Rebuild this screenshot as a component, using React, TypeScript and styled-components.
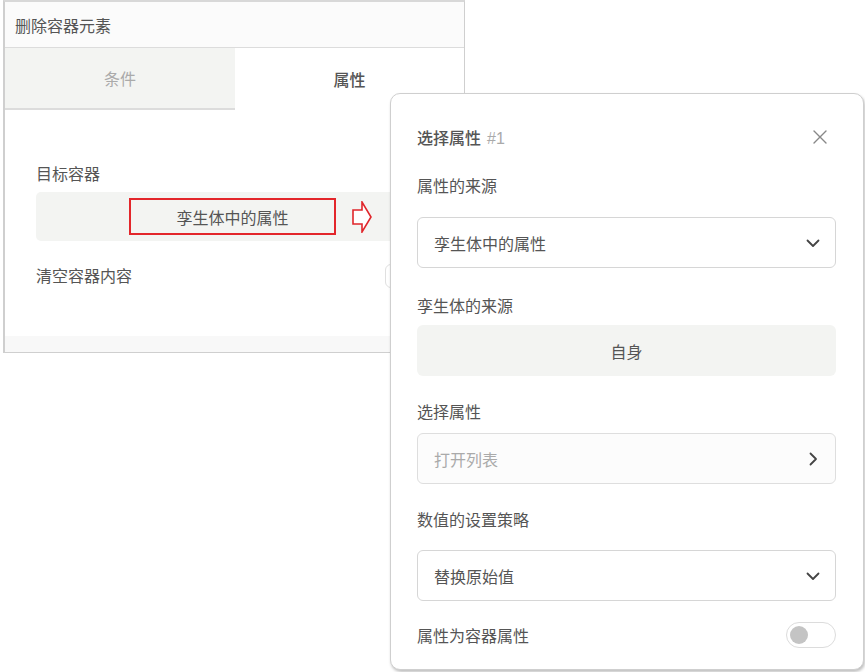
import React from "react";
import styled, { createGlobalStyle } from "styled-components";

const GlobalStyle = createGlobalStyle`
  html, body {
    margin: 0;
    padding: 0;
    background: #ffffff;
  }
  body {
    font-family: "Noto Sans CJK SC", "Noto Sans", sans-serif;
    color: #555;
  }
`;

const Page = styled.div`
  position: relative;
  width: 865px;
  height: 672px;
  overflow: hidden;
  background: #fff;
`;

/* ---- left panel ---- */

const Panel = styled.div`
  margin-left: 3px;
  width: 459px;
  height: 350px;
  border: 1px solid #cfcfcf;
  border-left-width: 2px;
  border-top: 2px solid #d8d8d8;
  display: flex;
  flex-direction: column;
  background: #f8f8f8;
`;

const PanelHeader = styled.div`
  height: 45px;
  display: flex;
  align-items: center;
  padding-left: 10px;
  font-size: 16px;
  color: #555;
  background: #fbfbfb;
  border-bottom: 1px solid #dcdcdc;
`;

const Tabs = styled.div`
  display: flex;
  height: 62px;
`;

const Tab = styled.div<{ $active?: boolean }>`
  flex: 0 0 ${(p) => (p.$active ? "229px" : "230px")};
  display: flex;
  align-items: center;
  justify-content: center;
  font-size: 16px;
  color: ${(p) => (p.$active ? "#555" : "#aaa")};
  background: ${(p) => (p.$active ? "#fff" : "#f3f4f2")};
  border-bottom: ${(p) => (p.$active ? "none" : "2px solid #dcdcdc")};
  font-weight: ${(p) => (p.$active ? 500 : 400)};
`;

const PanelBody = styled.div`
  background: #fff;
  height: 226px;
  padding: 51px 0 0 31px;
  box-sizing: border-box;
`;

const FieldLabel = styled.div`
  font-size: 16px;
  color: #555;
  line-height: 24px;
`;

const TargetBox = styled.div`
  margin-top: 7px;
  width: 360px;
  height: 49px;
  background: #f3f4f2;
  border-radius: 5px;
  display: flex;
  align-items: center;
  padding-left: 93px;
  box-sizing: border-box;
  gap: 16px;
`;

const Highlight = styled.div`
  width: 207px;
  height: 37px;
  box-sizing: border-box;
  border: 2px solid #e3262b;
  display: flex;
  align-items: center;
  justify-content: center;
  font-size: 16px;
  color: #555;
`;

const ClearRow = styled.div`
  margin-top: 22px;
`;

/* ---- popup ---- */

const Popup = styled.div`
  position: absolute;
  left: 390px;
  top: 93px;
  width: 474px;
  height: 577px;
  box-sizing: border-box;
  background: #fff;
  border: 1px solid #cfcfcf;
  border-radius: 10px;
  box-shadow: 1px 2px 3px rgba(0, 0, 0, 0.25);
  padding: 29px 27px 0 26px;
  display: flex;
  flex-direction: column;
`;

const TitleRow = styled.div`
  display: flex;
  align-items: center;
  justify-content: space-between;
  height: 28px;
`;

const Title = styled.div`
  font-size: 16px;
  font-weight: 500;
  color: #555;
  span {
    font-family: "Liberation Sans", sans-serif;
    font-weight: 400;
    color: #aaa;
    margin-left: 6px;
  }
`;

const CloseBtn = styled.div`
  width: 20px;
  height: 20px;
  margin-right: 6px;
  display: flex;
  align-items: center;
  justify-content: center;
`;

const Label = styled.div<{ $gap: number }>`
  font-size: 16px;
  color: #555;
  line-height: 24px;
  margin-top: ${(p) => p.$gap}px;
`;

const SelectBox = styled.div<{ $gap: number; $muted?: boolean }>`
  margin-top: ${(p) => p.$gap}px;
  height: 51px;
  box-sizing: border-box;
  border: 1px solid ${(p) => (p.$muted ? "#dedede" : "#d6d6d6")};
  border-radius: 6px;
  background: ${(p) => (p.$muted ? "#fcfcfc" : "#fff")};
  display: flex;
  align-items: center;
  justify-content: space-between;
  padding: 0 14px 0 16px;
  font-size: 16px;
  color: ${(p) => (p.$muted ? "#aaa" : "#555")};
`;

const StaticBox = styled.div`
  margin-top: 8px;
  height: 51px;
  border-radius: 6px;
  background: #f3f4f2;
  display: flex;
  align-items: center;
  justify-content: center;
  font-size: 16px;
  color: #555;
`;

const SwitchRow = styled.div`
  margin-top: 21px;
  display: flex;
  align-items: center;
  justify-content: space-between;
`;

const Switch = styled.div`
  width: 50px;
  height: 26px;
  box-sizing: border-box;
  border: 1.5px solid #dcdcdc;
  border-radius: 13px;
  background: #fff;
  display: flex;
  align-items: center;
  padding-left: 3px;
  &::after {
    content: "";
    width: 18px;
    height: 18px;
    border-radius: 50%;
    background: #c4c4c4;
  }
`;

const PeekSwitch = styled.div`
  position: absolute;
  left: 385px;
  top: 264px;
  width: 12px;
  height: 24px;
  border: 1.5px solid #e0e0e0;
  border-radius: 12px;
  box-sizing: border-box;
`;

const ChevronDown = () => (
  <svg width="16" height="16" viewBox="0 0 16 16" fill="none">
    <path d="M2.5 5.5 L8 11 L13.5 5.5" stroke="#444" strokeWidth="1.8" strokeLinecap="round" strokeLinejoin="round" />
  </svg>
);

const ChevronRight = () => (
  <svg width="16" height="16" viewBox="0 0 16 16" fill="none">
    <path d="M5.5 2.5 L11 8 L5.5 13.5" stroke="#444" strokeWidth="1.8" strokeLinecap="round" strokeLinejoin="round" />
  </svg>
);

const CloseIcon = () => (
  <svg width="16" height="16" viewBox="0 0 16 16" fill="none">
    <path d="M2 2 L14 14 M14 2 L2 14" stroke="#888" strokeWidth="1.4" strokeLinecap="round" />
  </svg>
);

const OutlineArrow = () => (
  <svg width="20" height="32" viewBox="0 0 20 32" fill="none">
    <path d="M1 9 L10 9 L10 1 L19 16 L10 31 L10 23 L1 23 Z" stroke="#e0262b" strokeWidth="1.6" strokeLinejoin="miter" fill="#fff" />
  </svg>
);

export default function App() {
  return (
    <Page>
      <GlobalStyle />
      <Panel>
        <PanelHeader>删除容器元素</PanelHeader>
        <Tabs>
          <Tab>条件</Tab>
          <Tab $active>属性</Tab>
        </Tabs>
        <PanelBody>
          <FieldLabel>目标容器</FieldLabel>
          <TargetBox>
            <Highlight>孪生体中的属性</Highlight>
            <OutlineArrow />
          </TargetBox>
          <ClearRow>
            <FieldLabel>清空容器内容</FieldLabel>
          </ClearRow>
        </PanelBody>
      </Panel>
      <PeekSwitch />

      <Popup>
        <TitleRow>
          <Title>
            选择属性<span>#1</span>
          </Title>
          <CloseBtn>
            <CloseIcon />
          </CloseBtn>
        </TitleRow>
        <Label $gap={22}>属性的来源</Label>
        <SelectBox $gap={20}>
          孪生体中的属性
          <ChevronDown />
        </SelectBox>
        <Label $gap={25}>孪生体的来源</Label>
        <StaticBox>自身</StaticBox>
        <Label $gap={23}>选择属性</Label>
        <SelectBox $gap={10} $muted>
          打开列表
          <ChevronRight />
        </SelectBox>
        <Label $gap={23}>数值的设置策略</Label>
        <SelectBox $gap={19}>
          替换原始值
          <ChevronDown />
        </SelectBox>
        <SwitchRow>
          <Label $gap={0}>属性为容器属性</Label>
          <Switch />
        </SwitchRow>
      </Popup>
    </Page>
  );
}
